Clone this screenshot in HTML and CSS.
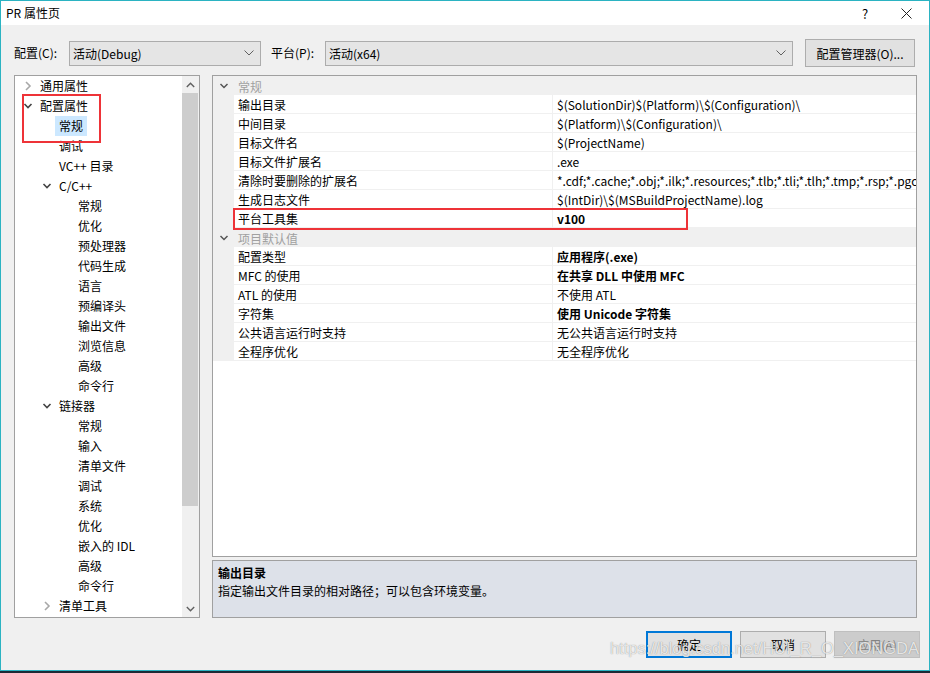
FILE: index.html
```html
<!DOCTYPE html>
<html lang="zh-CN">
<head>
<meta charset="utf-8">
<title>PR 属性页</title>
<link rel="stylesheet" href="styles.css">
</head>
<body>
<div class="window">
  <div class="titlebar">
    <span class="title">PR 属性页</span>
    <span class="help">?</span>
    <span class="close"><svg width="11" height="11" viewBox="0 0 11 11"><path d="M0.5 0.5 L10.5 10.5 M10.5 0.5 L0.5 10.5" stroke="#222" stroke-width="1" fill="none"/></svg></span>
  </div>
  <div class="body">
    <div class="toprow">
      <span class="lbl lbl-config">配置(C):</span>
      <div class="combo combo-config"><span>活动(Debug)</span><svg class="cv" width="10" height="6" viewBox="0 0 10 6"><path d="M0.5 0.5 L5 5 L9.5 0.5" stroke="#606060" fill="none"/></svg></div>
      <span class="lbl lbl-plat">平台(P):</span>
      <div class="combo combo-plat"><span>活动(x64)</span><svg class="cv" width="10" height="6" viewBox="0 0 10 6"><path d="M0.5 0.5 L5 5 L9.5 0.5" stroke="#606060" fill="none"/></svg></div>
      <button class="btn btn-mgr">配置管理器(O)...</button>
    </div>
    <div class="main">
      <div class="tree">
        <ul class="treelist">
          <li class="row l0"><span class="tw"><svg width="8" height="10" viewBox="0 0 8 10"><path d="M2 1 L6 5 L2 9" stroke="#a8a8a8" stroke-width="1.6" fill="none"/></svg></span><span class="tx">通用属性</span></li>
          <li class="row l0"><span class="tw"><svg width="10" height="8" viewBox="0 0 10 8"><path d="M1.5 2 L5 5.5 L8.5 2" stroke="#444" stroke-width="1.6" fill="none"/></svg></span><span class="tx">配置属性</span></li>
          <li class="row l1"><span class="tw"></span><span class="tx sel">常规</span></li>
          <li class="row l1"><span class="tw"></span><span class="tx">调试</span></li>
          <li class="row l1"><span class="tw"></span><span class="tx">VC++ 目录</span></li>
          <li class="row l1"><span class="tw"><svg width="10" height="8" viewBox="0 0 10 8"><path d="M1.5 2 L5 5.5 L8.5 2" stroke="#444" stroke-width="1.6" fill="none"/></svg></span><span class="tx">C/C++</span></li>
          <li class="row l2"><span class="tw"></span><span class="tx">常规</span></li>
          <li class="row l2"><span class="tw"></span><span class="tx">优化</span></li>
          <li class="row l2"><span class="tw"></span><span class="tx">预处理器</span></li>
          <li class="row l2"><span class="tw"></span><span class="tx">代码生成</span></li>
          <li class="row l2"><span class="tw"></span><span class="tx">语言</span></li>
          <li class="row l2"><span class="tw"></span><span class="tx">预编译头</span></li>
          <li class="row l2"><span class="tw"></span><span class="tx">输出文件</span></li>
          <li class="row l2"><span class="tw"></span><span class="tx">浏览信息</span></li>
          <li class="row l2"><span class="tw"></span><span class="tx">高级</span></li>
          <li class="row l2"><span class="tw"></span><span class="tx">命令行</span></li>
          <li class="row l1"><span class="tw"><svg width="10" height="8" viewBox="0 0 10 8"><path d="M1.5 2 L5 5.5 L8.5 2" stroke="#444" stroke-width="1.6" fill="none"/></svg></span><span class="tx">链接器</span></li>
          <li class="row l2"><span class="tw"></span><span class="tx">常规</span></li>
          <li class="row l2"><span class="tw"></span><span class="tx">输入</span></li>
          <li class="row l2"><span class="tw"></span><span class="tx">清单文件</span></li>
          <li class="row l2"><span class="tw"></span><span class="tx">调试</span></li>
          <li class="row l2"><span class="tw"></span><span class="tx">系统</span></li>
          <li class="row l2"><span class="tw"></span><span class="tx">优化</span></li>
          <li class="row l2"><span class="tw"></span><span class="tx">嵌入的 IDL</span></li>
          <li class="row l2"><span class="tw"></span><span class="tx">高级</span></li>
          <li class="row l2"><span class="tw"></span><span class="tx">命令行</span></li>
          <li class="row l1"><span class="tw"><svg width="8" height="10" viewBox="0 0 8 10"><path d="M2 1 L6 5 L2 9" stroke="#a8a8a8" stroke-width="1.6" fill="none"/></svg></span><span class="tx">清单工具</span></li>
        </ul>
        <div class="vscroll">
          <div class="sarrow"><svg width="9" height="6" viewBox="0 0 9 6"><path d="M0.8 5 L4.5 1.3 L8.2 5" stroke="#606060" stroke-width="1.4" fill="none"/></svg></div>
          <div class="strack"><div class="sthumb"></div></div>
          <div class="sarrow"><svg width="9" height="6" viewBox="0 0 9 6"><path d="M0.8 1 L4.5 4.7 L8.2 1" stroke="#606060" stroke-width="1.4" fill="none"/></svg></div>
        </div>
        <div class="mark mark-tree"></div>
      </div>
      <div class="right">
        <div class="grid">
          <div class="cat"><span class="gut"><svg width="10" height="8" viewBox="0 0 10 8"><path d="M1.5 2 L5 5.5 L8.5 2" stroke="#555" stroke-width="1.5" fill="none"/></svg></span><span class="catname">常规</span></div>
          <div class="prop"><span class="gut"></span><span class="pn">输出目录</span><span class="pv">$(SolutionDir)$(Platform)\$(Configuration)\</span></div>
          <div class="prop"><span class="gut"></span><span class="pn">中间目录</span><span class="pv">$(Platform)\$(Configuration)\</span></div>
          <div class="prop"><span class="gut"></span><span class="pn">目标文件名</span><span class="pv">$(ProjectName)</span></div>
          <div class="prop"><span class="gut"></span><span class="pn">目标文件扩展名</span><span class="pv">.exe</span></div>
          <div class="prop"><span class="gut"></span><span class="pn">清除时要删除的扩展名</span><span class="pv">*.cdf;*.cache;*.obj;*.ilk;*.resources;*.tlb;*.tli;*.tlh;*.tmp;*.rsp;*.pgc;*.pgd;*.meta;*.tlog;*.manifest;*.res;*.pch;*.exp;*.idb;*.rep;*.xdc;*.pdb</span></div>
          <div class="prop"><span class="gut"></span><span class="pn">生成日志文件</span><span class="pv">$(IntDir)\$(MSBuildProjectName).log</span></div>
          <div class="prop"><span class="gut"></span><span class="pn">平台工具集</span><span class="pv b">v100</span></div>
          <div class="cat"><span class="gut"><svg width="10" height="8" viewBox="0 0 10 8"><path d="M1.5 2 L5 5.5 L8.5 2" stroke="#555" stroke-width="1.5" fill="none"/></svg></span><span class="catname">项目默认值</span></div>
          <div class="prop"><span class="gut"></span><span class="pn">配置类型</span><span class="pv b">应用程序(.exe)</span></div>
          <div class="prop"><span class="gut"></span><span class="pn">MFC 的使用</span><span class="pv b">在共享 DLL 中使用 MFC</span></div>
          <div class="prop"><span class="gut"></span><span class="pn">ATL 的使用</span><span class="pv">不使用 ATL</span></div>
          <div class="prop"><span class="gut"></span><span class="pn">字符集</span><span class="pv b">使用 Unicode 字符集</span></div>
          <div class="prop"><span class="gut"></span><span class="pn">公共语言运行时支持</span><span class="pv">无公共语言运行时支持</span></div>
          <div class="prop"><span class="gut"></span><span class="pn">全程序优化</span><span class="pv">无全程序优化</span></div>
          <div class="mark mark-grid"></div>
        </div>
        <div class="desc">
          <div class="desc-title">输出目录</div>
          <div class="desc-text">指定输出文件目录的相对路径；可以包含环境变量。</div>
        </div>
      </div>
    </div>
    <div class="buttons">
      <button class="btn dlg default">确定</button>
      <button class="btn dlg">取消</button>
      <button class="btn dlg disabled">应用(A)</button>
      <span class="watermark">https://blog.csdn.net/HUI_R_O_XIONGDA</span>
    </div>
  </div>
</div>
</body>
</html>
```
FILE: styles.css
```css
* { box-sizing: border-box; }
html, body { margin: 0; padding: 0; }
body {
  width: 930px;
  height: 673px;
  background: #1d2a36;
  font-family: "Noto Sans CJK SC", "Noto Sans", sans-serif;
  font-size: 12px;
  color: #000;
  overflow: hidden;
}
.window {
  width: 930px;
  height: 671px;
  border: 1px solid #2bb3c2;
  background: #f0f0f0;
  display: flex;
  flex-direction: column;
}
.titlebar {
  height: 24px;
  background: #fff;
  display: flex;
  align-items: center;
  padding-left: 5px;
  flex: none;
}
.title { flex: 1; font-size: 12px; line-height: 24px; }
.help { width: 20px; font-size: 13px; margin-right: 26px; text-align: center; }
.close { width: 11px; margin-right: 17px; display: flex; }
.body { flex: 1; display: flex; flex-direction: column; }
.toprow {
  display: flex;
  align-items: center;
  height: 30px;
  margin-top: 13px;
  padding-left: 13px;
}
.lbl { line-height: 16px; }
.lbl-config { width: 55px; }
.lbl-plat { width: 54px; margin-left: 10px; }
.combo {
  height: 25px;
  background: #e5e5e5;
  border: 1px solid #acacac;
  display: flex;
  align-items: center;
  padding-left: 3px;
  padding-right: 6px;
}
.combo span { flex: 1; }
.combo-config { width: 192px; }
.combo-plat { width: 468px; }
.btn {
  font-family: "Noto Sans CJK SC", "Noto Sans", sans-serif;
  font-size: 12px;
  background: #e1e1e1;
  border: 1px solid #adadad;
  color: #000;
  padding: 0;
}
.btn-mgr { width: 110px; height: 28px; margin-left: 12px; }
.main {
  display: flex;
  margin-top: 7px;
  padding-left: 13px;
  height: 543px;
}
.tree {
  position: relative;
  width: 186px;
  height: 543px;
  border: 1px solid #a0a0a0;
  background: #fff;
  display: flex;
}
.treelist {
  list-style: none;
  margin: 0;
  padding: 0;
  flex: 1;
  overflow: hidden;
}
.row {
  height: 20px;
  display: flex;
  align-items: center;
  white-space: nowrap;
}
.row.l0 { padding-left: 5px; }
.row.l1 { padding-left: 24px; }
.row.l2 { padding-left: 43px; }
.tw { width: 16px; margin-right: 4px; display: flex; align-items: center; justify-content: center; }
.tx { line-height: 20px; }
.tx.sel { background: #cce8ff; padding: 0 4px; margin-left: -4px; }
.vscroll {
  width: 17px;
  background: #f0f0f0;
  display: flex;
  flex-direction: column;
}
.sarrow { height: 17px; display: flex; align-items: center; justify-content: center; }
.strack { flex: 1; }
.sthumb { height: 413px; margin: 0 1px 0 0; background: #cdcdcd; }
.mark { position: absolute; border: 2px solid #ee3338; pointer-events: none; }
.mark-tree { left: 7px; top: 18px; width: 79px; height: 49px; }
.right {
  margin-left: 12px;
  width: 705px;
  display: flex;
  flex-direction: column;
}
.grid {
  position: relative;
  height: 482px;
  border: 1px solid #a0a0a0;
  background: #fff;
  overflow: hidden;
}
.cat, .prop {
  height: 19px;
  display: flex;
  align-items: stretch;
  white-space: nowrap;
}
.cat { background: #f0f0f0; }
.gut { width: 21px; flex: none; background: #f0f0f0; display: flex; align-items: center; justify-content: center; }
.catname { color: #a0a0a0; padding-left: 4px; line-height: 19px; padding-top: 1px; }
.prop .pn, .prop .pv { border-bottom: 1px solid #f0f0f0; line-height: 18px; padding-left: 4px; padding-top: 1px; overflow: hidden; }
.pn { width: 319px; flex: none; border-right: 1px solid #f0f0f0; }
.pv { flex: 1; }
.pv.b { font-weight: bold; }
.mark-grid { left: 20px; top: 132px; width: 455px; height: 22px; }
.desc {
  margin-top: 3px;
  height: 58px;
  border: 1px solid #a0a0a0;
  background: #dde1e9;
  padding: 3px 5px;
}
.desc-title { font-weight: bold; line-height: 18px; }
.desc-text { line-height: 18px; }
.buttons {
  position: relative;
  display: flex;
  justify-content: flex-end;
  gap: 8px;
  padding-right: 9px;
  margin-top: 13px;
}
.dlg { width: 86px; height: 27px; }
.dlg.default { border: 2px solid #0078d7; }
.dlg.disabled { background: #cccccc; border-color: #bfbfbf; color: #838383; }
.watermark {
  position: absolute;
  right: 10px;
  top: 8px;
  font-family: "Liberation Sans", Arial, sans-serif;
  font-size: 16.5px;
  color: rgba(255, 255, 255, 0.8);
  text-shadow: 0 0 1px rgba(80, 80, 80, 0.7);
  white-space: nowrap;
  pointer-events: none;
}
```
